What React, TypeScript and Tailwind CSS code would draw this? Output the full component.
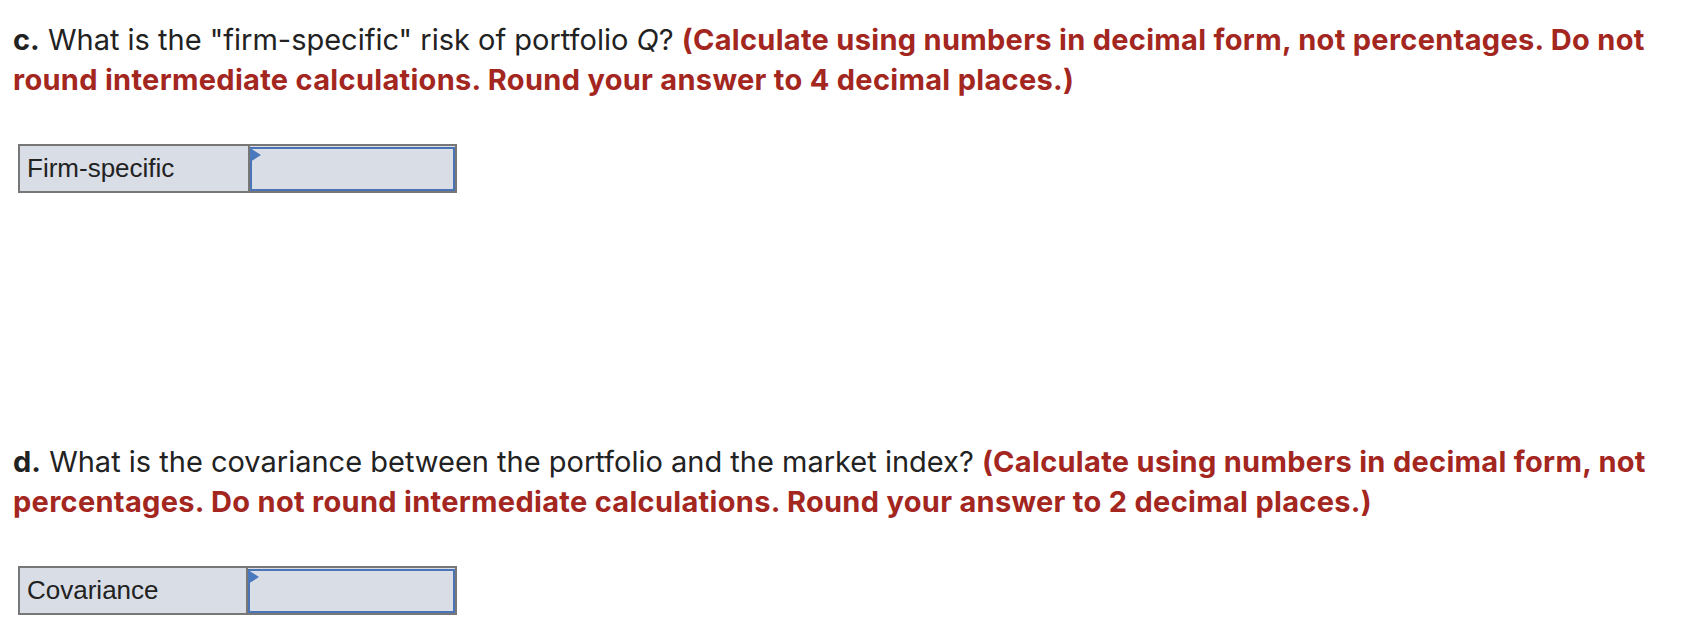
import React from "react";

function AnswerRow({ label, labelWidth }: { label: string; labelWidth: string }) {
  return (
    <div className="ml-[5px] flex h-[49px] w-[439px] border-2 border-[#777777] bg-[#d9dde6]">
      <div
        className={`${labelWidth} flex items-center border-r-2 border-[#777777] pl-[7px] text-[26px] text-[#222] [font-family:'Liberation_Sans',Arial,sans-serif]`}
      >
        {label}
      </div>
      <div className="relative flex-1 pt-px">
        <div className="h-full w-full border-2 border-[#4a74b6] bg-[#d9dde6]" />
        <svg
          className="absolute left-0 top-[2px]"
          width="11"
          height="14"
          viewBox="0 0 11 14"
        >
          <polygon points="0,0 11,7 0,14" fill="#4a78bd" />
        </svg>
      </div>
    </div>
  );
}

function Question({
  letter,
  prompt,
  note,
}: {
  letter: string;
  prompt: React.ReactNode;
  note: string;
}) {
  return (
    <p className="text-[29px] leading-[40px] text-[#222] [font-family:Inter,'Liberation_Sans',sans-serif]">
      <span className="font-bold">{letter}.</span> {prompt}{" "}
      <span className="font-bold tracking-[0.3px] text-[#a3261f]">{note}</span>
    </p>
  );
}

export default function App() {
  return (
    <div className="min-h-[642px] w-[1708px] bg-white pl-[13px] pr-[14px] pt-[20px]">
      <Question
        letter="c"
        prompt={
          <>
            What is the "firm-specific" risk of portfolio <i>Q</i>?
          </>
        }
        note="(Calculate using numbers in decimal form, not percentages. Do not round intermediate calculations. Round your answer to 4 decimal places.)"
      />
      <div className="mt-[44px]">
        <AnswerRow label="Firm-specific" labelWidth="w-[230px]" />
      </div>

      <div className="mt-[249px]">
        <Question
          letter="d"
          prompt="What is the covariance between the portfolio and the market index?"
          note="(Calculate using numbers in decimal form, not percentages. Do not round intermediate calculations. Round your answer to 2 decimal places.)"
        />
      </div>
      <div className="mt-[44px]">
        <AnswerRow label="Covariance" labelWidth="w-[228px]" />
      </div>
    </div>
  );
}
